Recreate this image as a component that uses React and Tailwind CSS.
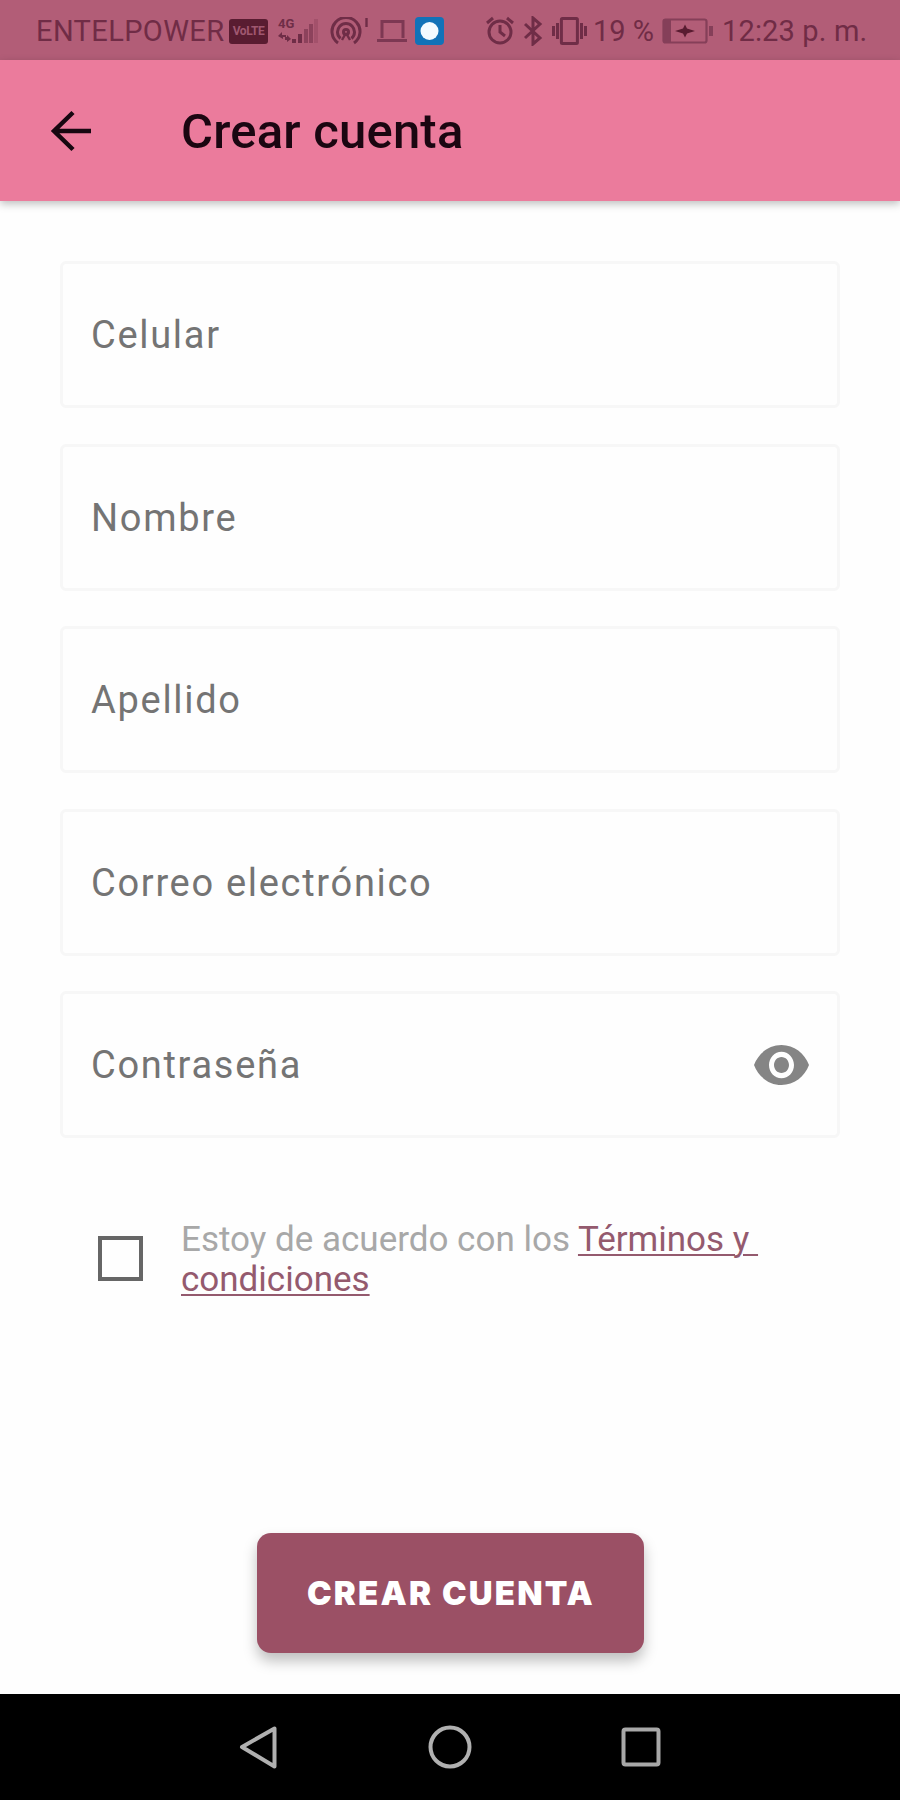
import React from "react";

const INK = "#6f2d47";

function StatusBar() {
  return (
    <div className="flex h-[60px] items-center bg-[#b25d77] pt-0.5 text-[29px] leading-none text-[#702c46]">
      <span className="ml-[36px] w-[193px] shrink-0 whitespace-nowrap leading-[34px] tracking-[0.4px]">ENTELPOWER</span>
      <span className="flex h-[25px] w-[39px] shrink-0 items-center justify-center rounded-[3px] bg-[#591c31] text-[12px] leading-[16px] font-bold tracking-[-0.4px] text-[#a05770]">
        VoLTE
      </span>
      <svg className="ml-[9px] shrink-0 overflow-visible" width="44" height="28" viewBox="0 0 44 28" fill={INK}>
        <text x="1" y="11" fontSize="13" fontWeight="700">4G</text>
        <path d="M1 19l4-4v3h4v2H6v2zM8 20h2v-2l4 4-4 3v-2H8z" />
        <rect x="15" y="22" width="4" height="4" />
        <rect x="21" y="17" width="4" height="9" />
        <g opacity="0.55">
          <rect x="27" y="12" width="4" height="14" />
          <rect x="32" y="7" width="4" height="19" />
          <rect x="37" y="2" width="4" height="24" opacity="0.4" />
        </g>
      </svg>
      <svg className="ml-[8px] shrink-0" width="40" height="28" viewBox="0 0 40 28" fill="none" stroke={INK} strokeWidth="3">
        <path d="M9 26A14 14 0 1 1 25 26M11.500 21.500A8.500 8.500 0 1 1 22.500 21.500" />
        <circle cx="17" cy="15" r="2.500" />
        <path d="M17 16l-4 7M17 16l4 7" strokeWidth="2.400" />
        <path d="M37.500 1v9" strokeWidth="2.400" />
      </svg>
      <svg className="ml-[8px] shrink-0" width="30" height="24" viewBox="0 0 30 24" fill="none" stroke="#7d3853" strokeWidth="3">
        <path d="M5 19V2.500h21V19M0 21.500h30" />
      </svg>
      <svg className="ml-[8px] shrink-0" width="29" height="28" viewBox="0 0 29 28">
        <rect width="29" height="28" rx="4" fill="#1272b8" />
        <circle cx="14.500" cy="14" r="9" fill="#f3faff" />
      </svg>
      <svg className="ml-[41px] shrink-0" width="30" height="30" viewBox="0 0 30 30" fill="none" stroke={INK} strokeWidth="3">
        <circle cx="15" cy="16" r="11" />
        <path d="M15 9v7l5 4M2 7l6-5M28 7l-6-5" />
      </svg>
      <svg className="ml-[8px] shrink-0" width="20" height="30" viewBox="0 0 20 30" fill="none" stroke={INK} strokeWidth="3">
        <path d="M2 8l15 14-7 6V2l7 6L2 22" />
      </svg>
      <svg className="ml-[9px] shrink-0" width="35" height="30" viewBox="0 0 35 30" fill="none" stroke={INK} strokeWidth="3">
        <rect x="9.400" y="2.400" width="16" height="25" rx="1" />
        <path d="M5.500 7v16M1.500 10v10M29.500 7v16M33.500 10v10" />
      </svg>
      <span className="ml-[6px] w-[62px] shrink-0 whitespace-nowrap leading-[34px]">19 %</span>
      <svg className="ml-[7px] shrink-0" width="52" height="26" viewBox="0 0 52 26" fill="none" stroke="#853f59" strokeWidth="2.200">
        <rect x="1.500" y="1.500" width="43" height="23" rx="2" />
        <path d="M49 8v10" strokeWidth="4" />
        <rect x="2" y="2" width="7" height="22" fill="#853f59" stroke="none" />
        <path d="M13 13l8-2.500 2-4 2 4 8 2.500-8 2.500-2 4-2-4z" fill="#591c31" stroke="none" />
      </svg>
      <span className="ml-[8px] whitespace-nowrap leading-[34px] tracking-[0.150px]">12:23 p. m.</span>
    </div>
  );
}

function Field({ label, children }) {
  return (
    <div className="flex h-[147px] items-center justify-between rounded-[6px] border-[3px] border-[#f7f7f7] pr-[28px] pl-[28px] text-[38px] text-[#747474]">
      <span className="pt-[2px] tracking-[1.700px]">{label}</span>
      {children}
    </div>
  );
}

export default function App() {
  return (
    <div className="flex h-[1800px] w-[900px] flex-col overflow-hidden bg-[#fefefe] font-['Roboto',sans-serif]">
      <StatusBar />
      <header className="z-10 flex h-[141px] items-center bg-[#eb7b9c] shadow-[0_3px_8px_rgba(0,0,0,0.25)]">
        <svg className="ml-[50px] shrink-0" width="42" height="42" viewBox="0 0 42 42" fill="none" stroke="#170710" strokeWidth="4.500">
          <path d="M41 21H4M23 2.500L4 21l19 18.500" />
        </svg>
        <h1 className="ml-[89px] pt-[2px] text-[49px] font-medium tracking-[0.2px] text-[#1b0611]">Crear cuenta</h1>
      </header>
      <main className="flex grow flex-col">
        <div className="mx-[60px] mt-[60px] flex flex-col gap-[35.500px]">
          <Field label="Celular" />
          <Field label="Nombre" />
          <Field label="Apellido" />
          <Field label="Correo electrónico" />
          <Field label="Contraseña">
            <svg width="55" height="40" viewBox="1 4.500 22 15" preserveAspectRatio="none" fill="#858585">
              <path d="M12 4.500C7 4.500 2.730 7.610 1 12c1.730 4.390 6 7.500 11 7.500s9.270-3.110 11-7.500c-1.730-4.390-6-7.500-11-7.500zM12 17c-2.760 0-5-2.240-5-5s2.240-5 5-5 5 2.240 5 5-2.240 5-5 5zm0-8c-1.660 0-3 1.340-3 3s1.340 3 3 3 3-1.340 3-3-1.340-3-3-3z" />
            </svg>
          </Field>
        </div>
        <div className="mt-[79px] flex items-center">
          <div className="ml-[98px] size-[45px] shrink-0 border-[4px] border-[#666]" />
          <p className="ml-[38px] pt-[3px] text-[35px] leading-[40px] whitespace-nowrap text-[#a8a8a8]">
            Estoy de acuerdo con los{" "}
            <span className="whitespace-pre text-[#945a6e] underline decoration-2 underline-offset-[3px]">{"Términos y "}</span>
            <br />
            <span className="text-[#945a6e] underline decoration-2 underline-offset-[3px]">condiciones</span>
          </p>
        </div>
        <button className="mt-auto mb-[41px] h-[120px] w-[387px] self-center rounded-[14px] bg-[#9b5065] pt-[2px] pl-[2px] font-['Inter',sans-serif] text-[33px] font-black tracking-[2.200px] text-white shadow-[0_8px_14px_rgba(0,0,0,0.25)]">
          CREAR CUENTA
        </button>
      </main>
      <nav className="flex h-[106px] items-center bg-black">
        <svg className="ml-[239px] shrink-0" width="40" height="44" viewBox="0 0 40 44" fill="none" stroke="#b0b0b0" strokeWidth="4" strokeLinejoin="round">
          <path d="M35.500 3.500v38L3 22z" />
        </svg>
        <svg className="ml-[148px] shrink-0" width="46" height="46" viewBox="0 0 46 46" fill="none" stroke="#b0b0b0" strokeWidth="4">
          <circle cx="23" cy="23" r="19.500" />
        </svg>
        <svg className="ml-[148px] shrink-0" width="40" height="40" viewBox="0 0 40 40" fill="none" stroke="#a8a8a8" strokeWidth="4">
          <rect x="2.500" y="2.500" width="35" height="35" rx="2" />
        </svg>
      </nav>
    </div>
  );
}
